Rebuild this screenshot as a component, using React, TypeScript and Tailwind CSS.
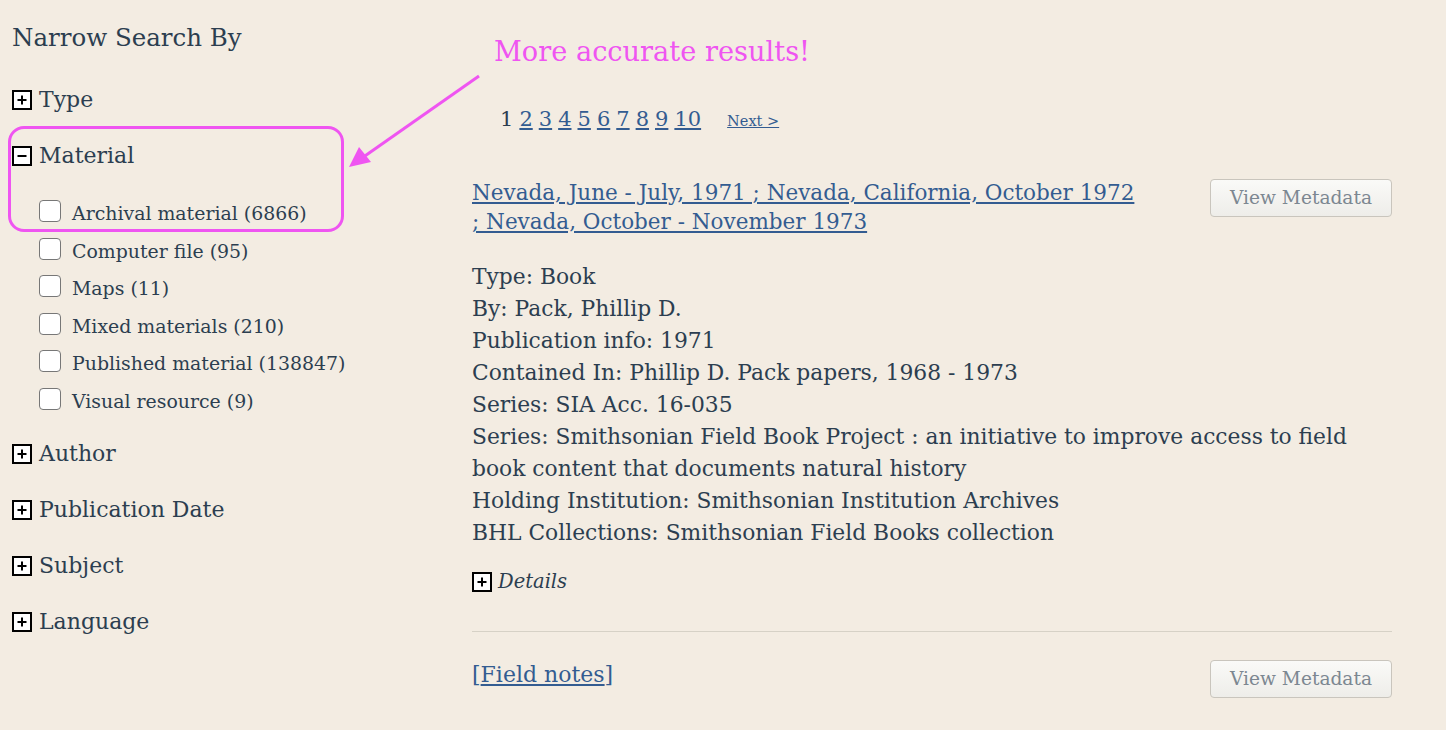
import React from 'react';

const serif = { fontFamily: '"DejaVu Serif", "Liberation Serif", serif' };

const PlusBox: React.FC<{ minus?: boolean }> = ({ minus }) => (
  <svg width="20" height="20" viewBox="0 0 20 20" className="shrink-0">
    <rect x="1" y="1" width="18" height="18" fill="#fff" stroke="#000" strokeWidth="2" />
    <path d="M5.5 10h9" stroke="#000" strokeWidth="2" />
    {!minus && <path d="M10 5.5v9" stroke="#000" strokeWidth="2" />}
  </svg>
);

const facetsAfter = ['Author', 'Publication Date', 'Subject', 'Language'];
const materials = [
  'Archival material (6866)',
  'Computer file (95)',
  'Maps (11)',
  'Mixed materials (210)',
  'Published material (138847)',
  'Visual resource (9)',
];

const details = [
  'Type: Book',
  'By: Pack, Phillip D.',
  'Publication info: 1971',
  'Contained In: Phillip D. Pack papers, 1968 - 1973',
  'Series: SIA Acc. 16-035',
  'Series: Smithsonian Field Book Project : an initiative to improve access to field book content that documents natural history',
  'Holding Institution: Smithsonian Institution Archives',
  'BHL Collections: Smithsonian Field Books collection',
];

const Facet: React.FC<{ label: string; minus?: boolean }> = ({ label, minus }) => (
  <div className="h-[56px] flex items-center gap-[7px]">
    <PlusBox minus={minus} />
    <span className="text-[22px] leading-none">{label}</span>
  </div>
);

const MetaButton: React.FC = () => (
  <button className="w-[182px] h-[38px] shrink-0 rounded-[4px] border border-[#c9c5bd] bg-gradient-to-b from-[#fafaf8] to-[#eeede9] text-[#7c8791] text-[18.6px] leading-none">
    View Metadata
  </button>
);

export default function App() {
  return (
    <div className="relative w-[1446px] h-[730px] overflow-hidden bg-[#f3ece2] text-[#2c3e50]" style={serif}>
      <div className="flex">
        {/* facets */}
        <aside className="w-[472px] shrink-0 pl-[12px] pt-[22px]">
          <h2 className="text-[24.5px] leading-[32px]">Narrow Search By</h2>
          <div className="mt-[18px]">
            <Facet label="Type" />
            <Facet label="Material" minus />
            <ul className="mt-[11px] pl-[27px]">
              {materials.map((m) => (
                <li key={m} className="h-[37.5px] flex items-center gap-[11px]">
                  <span className="w-[22px] h-[22px] rounded-[4px] border-[1.5px] border-[#777] bg-white -mt-[5px]" />
                  <span className="text-[18.9px] leading-none">{m}</span>
                </li>
              ))}
            </ul>
            <div className="mt-[6px]">
              {facetsAfter.map((f) => (
                <Facet key={f} label={f} />
              ))}
            </div>
          </div>
        </aside>

        {/* results */}
        <main className="w-[920px] shrink-0 pt-[104px]">
          <div className="pl-[28px] flex items-baseline h-[26px]">
            <span className="text-[21px] mr-[6px]">1</span>
            {['2', '3', '4', '5', '6', '7', '8', '9', '10'].map((n) => (
              <a key={n} href="#" className="text-[21px] text-[#335c91] underline mr-[6px]">
                {n}
              </a>
            ))}
            <a href="#" className="ml-[20px] text-[14.5px] text-[#335c91] underline">
              Next &gt;
            </a>
          </div>

          <div className="mt-[48px] flex justify-between items-start">
            <a href="#" className="w-[670px] text-[21.5px] leading-[29px] text-[#335c91] underline">
              Nevada, June - July, 1971 ; Nevada, California, October 1972 ; Nevada, October - November 1973
            </a>
            <div className="pt-[1px]">
              <MetaButton />
            </div>
          </div>

          <div className="mt-[25px] text-[21.8px] leading-[32px]">
            {details.map((d) => (
              <div key={d}>{d}</div>
            ))}
          </div>

          <div className="mt-[21px] flex items-center gap-[6px] h-[24px]">
            <PlusBox />
            <span className="italic text-[19.5px] leading-none">Details</span>
          </div>

          <hr className="mt-[37px] border-0 border-t border-[#d6d1c6]" />

          <div className="mt-[28px] flex justify-between items-start">
            <a href="#" className="text-[22px] leading-[29px] text-[#335c91]">
              [<span className="underline">Field notes</span>]
            </a>
            <MetaButton />
          </div>
        </main>
      </div>

      {/* annotation overlay */}
      <div className="absolute left-[8px] top-[126px] w-[336px] h-[106px] rounded-[16px] border-[3px] border-[#ef55f1] pointer-events-none" />
      <svg className="absolute left-0 top-0 pointer-events-none" width="1446" height="730">
        <line x1="479" y1="76" x2="362" y2="158" stroke="#ef55f1" strokeWidth="3" />
        <polygon points="349,167 359,147 371,162" fill="#ef55f1" />
      </svg>
      <div className="absolute left-[494px] top-[32px] text-[27.2px] leading-[40px] text-[#ef55f1]">
        More accurate results!
      </div>
    </div>
  );
}
